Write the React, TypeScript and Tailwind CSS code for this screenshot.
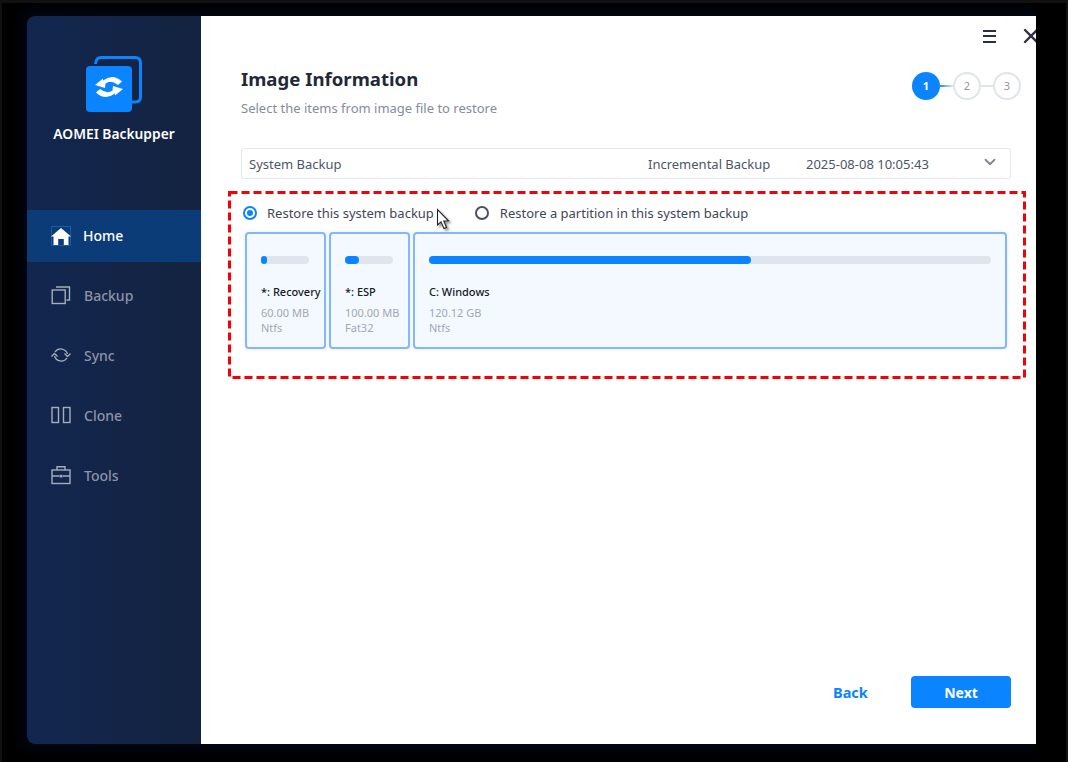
import { ChevronDown, X } from "lucide-react";

const font = { fontFamily: '"Noto Sans", sans-serif' };

const HomeIcon = () => (
  <svg width="20" height="20" viewBox="0 0 20 20" className="shrink-0">
    <rect x="0.5" y="0.5" width="19" height="19" fill="none" stroke="#1d5aa6" />
    <path d="M10 2 L20 10.5 L17.5 10.5 L17.5 19 L12.8 19 L12.8 13 L7.2 13 L7.2 19 L2.5 19 L2.5 10.5 L0 10.5 Z" fill="#fff" />
  </svg>
);

const BackupIcon = () => (
  <svg width="20" height="20" viewBox="0 0 20 20" fill="none" stroke="#a5adbd" strokeWidth="1.4" className="shrink-0">
    <rect x="1.2" y="5" width="13" height="13.5" />
    <path d="M5 2 H18.5 V15 H15.5" />
  </svg>
);

const SyncIcon = () => (
  <svg width="20" height="20" viewBox="0 0 20 20" fill="none" stroke="#a5adbd" strokeWidth="1.3" className="shrink-0">
    <path d="M4 7 A7 7 0 0 1 16.5 9" />
    <path d="M16 13 A7 7 0 0 1 3.5 11" />
    <path d="M0.5 11.5 L3.5 8.5 L6.5 11.5" />
    <path d="M13.5 8.5 L16.5 11.5 L19.5 8.5" />
  </svg>
);

const CloneIcon = () => (
  <svg width="20" height="20" viewBox="0 0 20 20" fill="none" stroke="#a5adbd" strokeWidth="1.4" className="shrink-0">
    <rect x="1" y="2.5" width="6.5" height="15" />
    <rect x="12.5" y="2.5" width="6.5" height="15" />
  </svg>
);

const ToolsIcon = () => (
  <svg width="20" height="20" viewBox="0 0 20 20" fill="none" stroke="#a5adbd" strokeWidth="1.4" className="shrink-0">
    <rect x="1" y="5" width="18" height="13.5" />
    <path d="M6 5 V1.8 H14 V5" />
    <path d="M1 11 H8 M12 11 H19" />
    <rect x="8.5" y="9.8" width="3" height="2.6" fill="#a5adbd" stroke="none" />
  </svg>
);

const Logo = () => (
  <svg width="56" height="56" viewBox="0 0 56 56">
    <path d="M9.5 8 Q10 1.5 15 1.5 H49 Q54.5 1.5 54.5 7 V41 Q54.5 46 49 46 H46" fill="none" stroke="#0a84ff" strokeWidth="3" />
    <rect x="0" y="10" width="46" height="46" rx="4" fill="#0a84ff" />
    <path d="M9 29 L17 22.5 L17 24.5 Q27 17 36 25.5 L32 29 Q25 23.5 19.5 27.5 L19 32 Z" fill="#fff" />
    <path d="M37 33 L29 39.5 L29 37.5 Q19 45 10 36.5 L14 33 Q21 38.5 26.5 34.5 L27 30 Z" fill="#fff" />
  </svg>
);

const navItems = [
  { label: "Backup", icon: <BackupIcon /> },
  { label: "Sync", icon: <SyncIcon /> },
  { label: "Clone", icon: <CloneIcon /> },
  { label: "Tools", icon: <ToolsIcon /> },
];

const partitions = [
  { name: "*: Recovery", size: "60.00 MB", fs: "Ntfs", bar: "w-[48px]", fill: "w-[6px]", cls: "w-[81px]" },
  { name: "*: ESP", size: "100.00 MB", fs: "Fat32", bar: "w-[48px]", fill: "w-[14px]", cls: "w-[81px]" },
  { name: "C: Windows", size: "120.12 GB", fs: "Ntfs", bar: "w-full", fill: "w-[322px]", cls: "flex-1" },
];

export default function App() {
  return (
    <div className="relative w-[1068px] h-[762px] overflow-hidden bg-[#111] pt-[3px] px-[2px]" style={font}>
      <div className="h-[759px] bg-black">
        <div className="w-[1034px] h-[759px] overflow-hidden pt-[13px] pl-[25px]">
          <div className="flex w-[1009px] h-[728px] shadow-[0_0_14px_4px_#020818]">
            {/* sidebar */}
            <aside className="w-[174px] shrink-0 rounded-l-lg bg-gradient-to-r from-[#12264f] to-[#142340]">
              <div className="flex flex-col items-center pt-10">
                <Logo />
                <div className="mt-[12px] text-[13.8px] leading-5 font-semibold text-white whitespace-nowrap">AOMEI Backupper</div>
              </div>
              <nav className="mt-[66px]">
                <div className="flex h-[52px] items-center gap-3 pl-6 pb-[1px] bg-[#0b3c78] text-[14px] font-medium text-white">
                  <HomeIcon />
                  Home
                </div>
                <div className="mt-1">
                  {navItems.map((item) => (
                    <div key={item.label} className="flex h-[60px] items-center gap-[13px] pl-6 pb-[2px] text-[14px] font-medium text-[#8d93a6]">
                      {item.icon}
                      {item.label}
                    </div>
                  ))}
                </div>
              </nav>
            </aside>

            {/* main panel */}
            <main className="flex flex-1 flex-col bg-white overflow-hidden">
              <div className="flex h-10 items-center justify-end">
                <div className="mr-[23px] flex w-[13px] flex-col gap-[3.5px]">
                  <span className="h-[2px] bg-[#2b3040]" />
                  <span className="h-[2px] bg-[#2b3040]" />
                  <span className="h-[2px] bg-[#2b3040]" />
                </div>
                <X size={24} strokeWidth={2.4} className="text-[#2f3442] -mr-[7px] shrink-0" />
              </div>

              <div className="flex items-start justify-between pl-10 pr-[15px]">
                <div>
                  <h1 className="mt-[10px] text-[18.6px] leading-[26px] font-bold text-[#1f2937]">Image Information</h1>
                  <p className="mt-[6px] text-[13px] leading-5 text-[#858b9b]">Select the items from image file to restore</p>
                </div>
                <div className="mt-[16px] flex items-center">
                  <div className="flex h-7 w-7 items-center justify-center rounded-full bg-[#0a84ff] text-[11px] font-bold text-white">1</div>
                  <div className="h-[2px] w-[13px] bg-gradient-to-r from-[#0a84ff] to-[#e0e4ec]" />
                  <div className="flex h-7 w-7 items-center justify-center rounded-full border-2 border-[#e0e4ec] text-[11px] text-[#8f94aa]">2</div>
                  <div className="h-[2px] w-[12px] bg-[#e0e4ec]" />
                  <div className="flex h-7 w-7 items-center justify-center rounded-full border-2 border-[#e0e4ec] text-[11px] text-[#8f94aa]">3</div>
                </div>
              </div>

              <div className="ml-10 mt-[30px] flex h-[31px] w-[770px] items-center border border-[#e6e8f0] rounded-[2px] pl-[7px] pr-[11px] text-[13px] text-[#4d5566]">
                <span className="flex-1 pt-[2px]">System Backup</span>
                <span className="w-[158px] pt-[2px]">Incremental Backup</span>
                <span className="w-[174px] pt-[2px]">2025-08-08 10:05:43</span>
                <ChevronDown size={18} strokeWidth={2.4} className="mb-1 ml-[1px] text-[#80869a]" />
              </div>

              {/* selection */}
              <div className="relative ml-[27px] mt-3 h-[188px] w-[798px] px-[17px] pt-3">
                <svg className="absolute inset-0" width="798" height="188" fill="none">
                  <rect x="1.5" y="1.5" width="795" height="185" stroke="#f40009" strokeWidth="3" strokeDasharray="8 4" />
                </svg>
                <div className="flex h-5 items-center -ml-[2px] text-[13px] text-[#3f4656]">
                  <span className="flex h-[14px] w-[14px] items-center justify-center rounded-full border-2 border-[#0a84ff]">
                    <span className="h-[6px] w-[6px] rounded-full bg-[#0a84ff]" />
                  </span>
                  <span className="ml-[10px] pt-[1px]">Restore this system backup</span>
                  <span className="ml-[41px] h-[14px] w-[14px] rounded-full border-2 border-[#4b5060]" />
                  <span className="ml-[11px] pt-[1px]">Restore a partition in this system backup</span>
                </div>
                <div className="mt-[9px] flex w-[762px] gap-[3px]">
                  {partitions.map((p) => (
                    <div key={p.name} className={`${p.cls} h-[117px] rounded-[4px] border-2 border-[#80b8fb] bg-[#f3f9ff] px-[14px] pt-[22px] shadow-[0_0_4px_#e6e9f2]`}>
                      <div className={`${p.bar} h-2 rounded-full bg-[#e0e4ec]`}>
                        <div className={`${p.fill} h-2 rounded-full bg-[#0a84ff]`} />
                      </div>
                      <div className="mt-[20px] text-[11px] leading-4 font-medium whitespace-nowrap text-[#141a26]">{p.name}</div>
                      <div className="mt-[5px] text-[11px] leading-[15px] text-[#a2a7b3] whitespace-nowrap">{p.size}</div>
                      <div className="text-[11px] leading-[15px] text-[#a2a7b3]">{p.fs}</div>
                    </div>
                  ))}
                </div>
              </div>

              <div className="ml-[632px] mt-[297px] flex items-center">
                <span className="w-[78px] pt-[2px] text-[14.5px] font-bold text-[#0a84ff]">Back</span>
                <div className="flex h-8 w-[100px] items-center justify-center rounded-[4px] pt-[1px] bg-[#0a84ff] text-[14px] font-bold text-white">Next</div>
              </div>
            </main>
          </div>
        </div>
      </div>

      {/* mouse pointer */}
      <svg className="absolute left-[436px] top-[208px] drop-shadow-[2px_2px_1px_rgba(0,0,0,0.4)]" width="16" height="24" viewBox="0 0 16 24">
        <path d="M1.5 1.5 V17 L5 13.8 L8 20.5 L10.5 19.5 L7.8 13 L12.5 12.8 Z" fill="#fff" stroke="#222" strokeWidth="1.1" />
      </svg>
    </div>
  );
}
